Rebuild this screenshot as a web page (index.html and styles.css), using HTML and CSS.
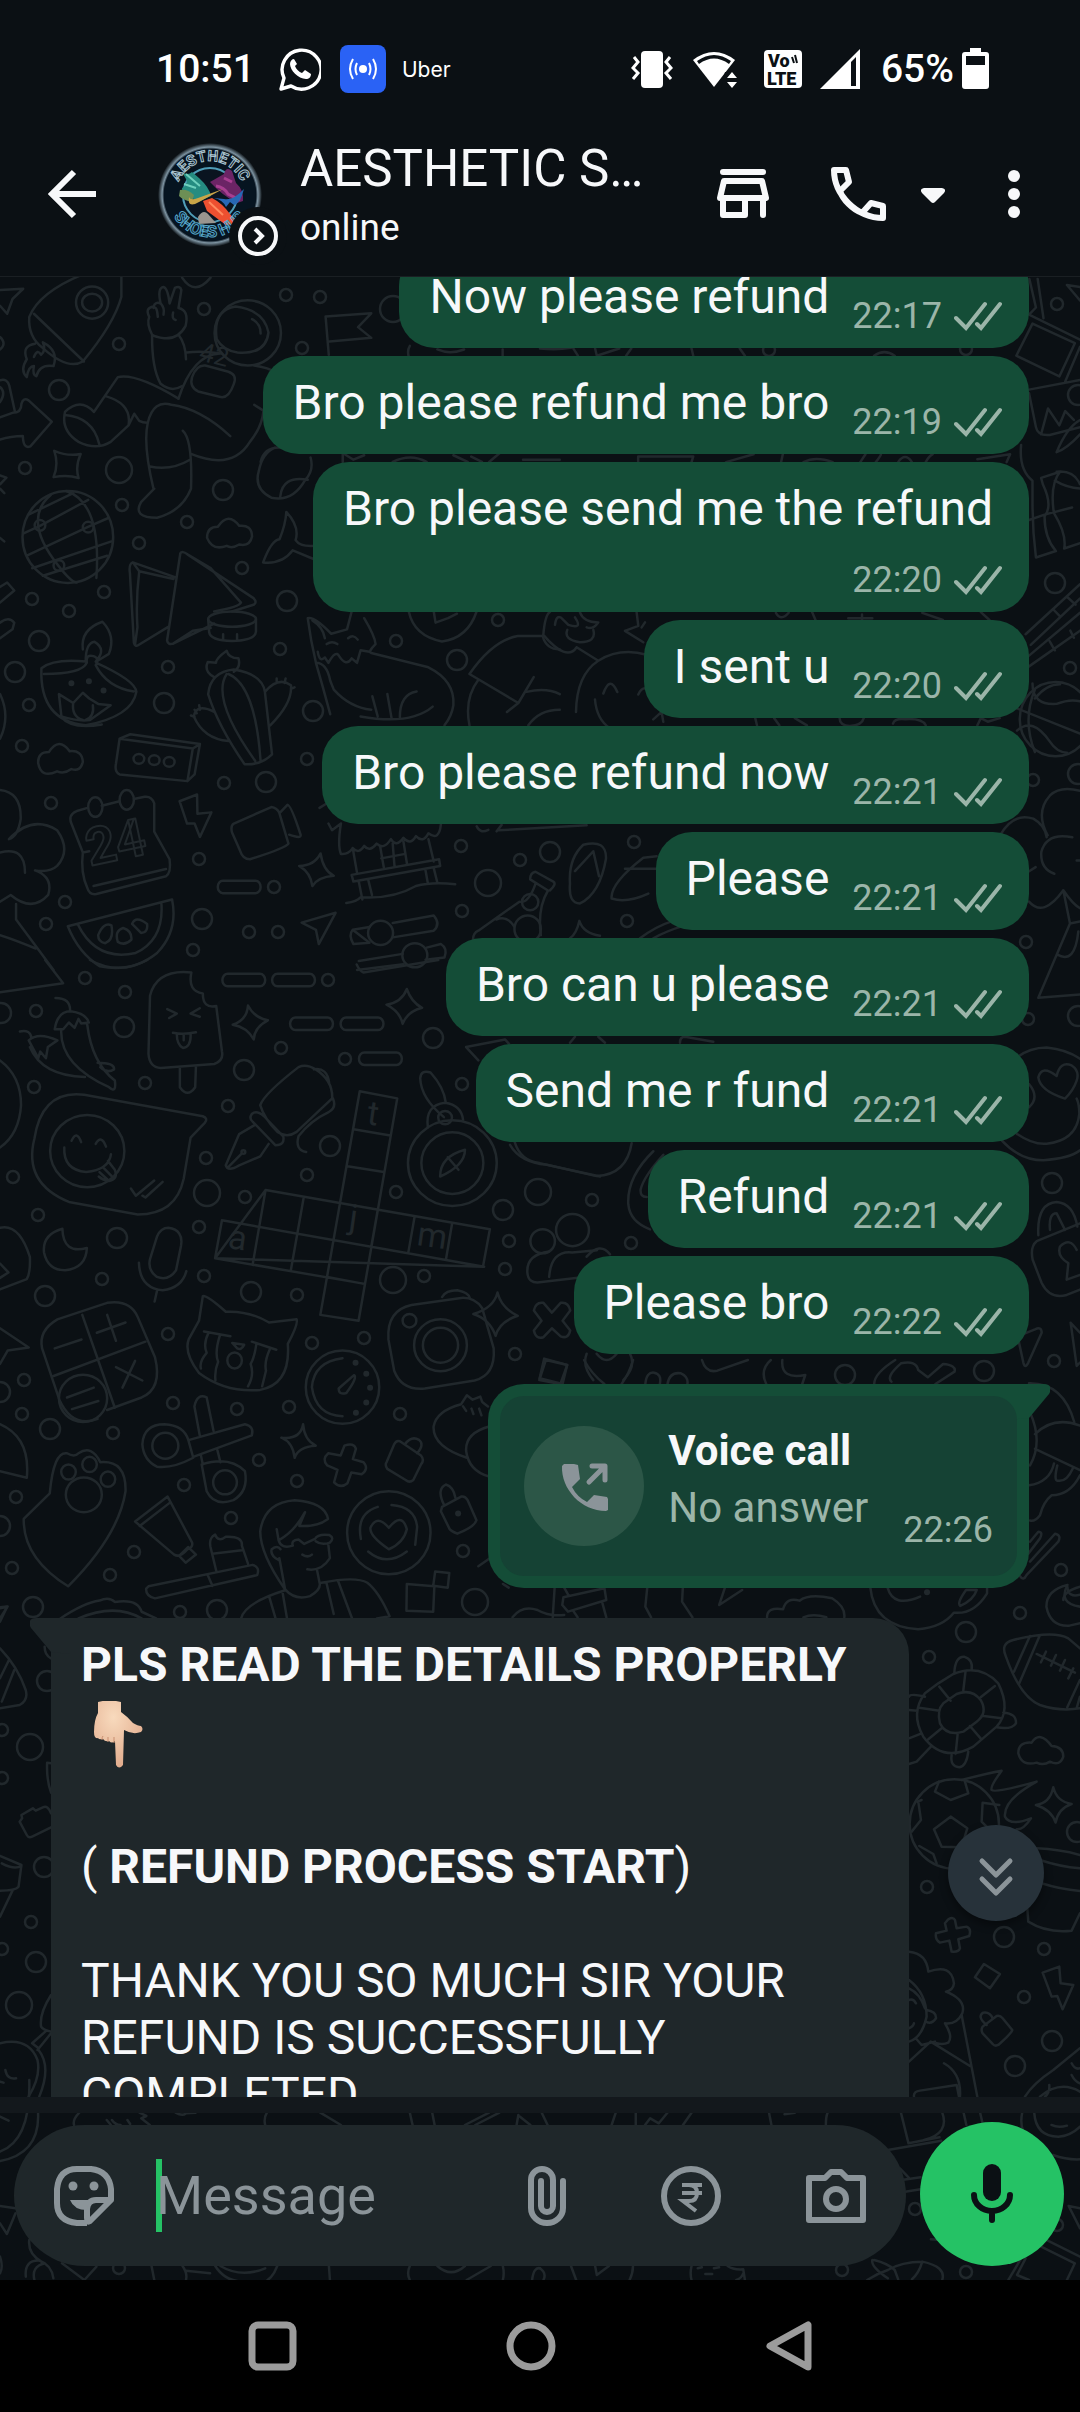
FILE: index.html
```html
<!DOCTYPE html>
<html lang="en">
<head>
    <meta charset="UTF-8">
    <meta name="viewport" content="width=device-width, initial-scale=1.0">
    <title>Chat</title>
    <link rel="stylesheet" href="styles.css">
</head>
<body>
    <!-- Shared shapes -->
    <svg class="defs" aria-hidden="true">
        <symbol id="ticks" viewBox="0 0 48 30">
            <path d="M2 17l10 10L31 3M23 23l4 4L46 3" fill="none" stroke="currentColor" stroke-width="4" stroke-linecap="round"/>
        </symbol>
    </svg>

    <!-- Wallpaper doodles -->
    <svg class="wallpaper" viewBox="0 0 1080 2412" preserveAspectRatio="xMidYMin slice" aria-hidden="true">
        <defs>
            <circle id="s" r="6"/>
            <circle id="m" r="10"/>
            <circle id="l" r="13"/>
        </defs>
        <g>
            <use href="#s" x="119" y="344"/><use href="#s" x="204" y="309"/><use href="#s" x="286" y="295"/><use href="#s" x="320" y="297"/>
            <use href="#s" x="302" y="348"/><use href="#s" x="25" y="468"/><use href="#s" x="122" y="505"/><use href="#s" x="187" y="522"/>
            <use href="#s" x="139" y="543"/><use href="#s" x="242" y="568"/><use href="#s" x="104" y="592"/><use href="#s" x="32" y="599"/>
            <use href="#s" x="69" y="611"/><use href="#s" x="168" y="667"/><use href="#s" x="280" y="649"/><use href="#s" x="29" y="705"/>
            <use href="#s" x="22" y="746"/><use href="#s" x="51" y="803"/><use href="#s" x="224" y="783"/><use href="#s" x="307" y="759"/>
            <use href="#s" x="396" y="641"/><use href="#s" x="199" y="859"/><use href="#s" x="274" y="887"/><use href="#s" x="249" y="932"/>
            <use href="#s" x="278" y="932"/><use href="#s" x="65" y="902"/><use href="#s" x="46" y="924"/><use href="#s" x="193" y="950"/>
            <use href="#s" x="461" y="846"/><use href="#s" x="462" y="911"/><use href="#s" x="520" y="860"/><use href="#s" x="498" y="620"/>
            <use href="#s" x="634" y="842"/><use href="#s" x="627" y="921"/><use href="#s" x="631" y="1243"/><use href="#s" x="85" y="978"/>
            <use href="#s" x="125" y="992"/><use href="#s" x="36" y="1011"/><use href="#s" x="281" y="1048"/><use href="#s" x="328" y="980"/>
            <use href="#s" x="345" y="1059"/><use href="#s" x="145" y="1083"/><use href="#s" x="34" y="1087"/><use href="#s" x="228" y="1106"/>
            <use href="#s" x="13" y="1177"/><use href="#s" x="206" y="1158"/><use href="#s" x="307" y="1175"/><use href="#s" x="245" y="1197"/>
            <use href="#s" x="38" y="1215"/><use href="#s" x="199" y="1227"/><use href="#s" x="396" y="1192"/><use href="#s" x="102" y="1279"/>
            <use href="#s" x="204" y="1276"/><use href="#s" x="297" y="1295"/><use href="#s" x="424" y="1276"/><use href="#s" x="364" y="1338"/>
            <use href="#s" x="312" y="1343"/><use href="#s" x="168" y="1334"/><use href="#s" x="24" y="1380"/><use href="#s" x="22" y="1414"/>
            <use href="#s" x="113" y="1433"/><use href="#s" x="173" y="1403"/><use href="#s" x="237" y="1409"/><use href="#s" x="289" y="1407"/>
            <use href="#s" x="400" y="1414"/><use href="#s" x="259" y="1460"/><use href="#s" x="184" y="1485"/><use href="#s" x="297" y="1481"/>
            <use href="#s" x="231" y="1518"/><use href="#s" x="134" y="1552"/><use href="#s" x="110" y="1575"/><use href="#s" x="16" y="1497"/>
            <use href="#s" x="12" y="1568"/><use href="#s" x="180" y="1612"/><use href="#s" x="463" y="1551"/><use href="#s" x="515" y="1354"/>
            <use href="#s" x="505" y="1269"/><use href="#s" x="509" y="1241"/><use href="#s" x="592" y="1200"/><use href="#s" x="462" y="1084"/>
            <use href="#s" x="929" y="1657"/><use href="#s" x="1020" y="1613"/><use href="#s" x="927" y="1887"/><use href="#s" x="1044" y="1949"/>
            <use href="#s" x="1024" y="1997"/><use href="#s" x="1070" y="668"/><use href="#s" x="1033" y="780"/><use href="#s" x="1026" y="942"/>
            <use href="#s" x="1028" y="1019"/><use href="#s" x="1054" y="1361"/><use href="#s" x="1061" y="1570"/><use href="#s" x="1057" y="304"/>
            <use href="#s" x="31" y="1922"/><use href="#s" x="2" y="1730"/><use href="#s" x="2" y="1778"/><use href="#s" x="2" y="1949"/>
            <use href="#s" x="769" y="350"/><use href="#s" x="966" y="349"/><use href="#s" x="782" y="602"/><use href="#s" x="119" y="2268"/>
            <use href="#s" x="842" y="2270"/><use href="#s" x="966" y="2272"/><use href="#s" x="915" y="2209"/><use href="#s" x="1057" y="2225"/>
        </g>
        <g>
            <use href="#m" x="59" y="390"/><use href="#m" x="223" y="490"/><use href="#m" x="287" y="601"/><use href="#m" x="39" y="641"/>
            <use href="#m" x="15" y="672"/><use href="#m" x="164" y="703"/><use href="#m" x="313" y="711"/><use href="#m" x="266" y="782"/>
            <use href="#m" x="202" y="919"/><use href="#m" x="457" y="660"/><use href="#m" x="550" y="852"/><use href="#m" x="124" y="1027"/>
            <use href="#m" x="244" y="1070"/><use href="#m" x="433" y="1038"/><use href="#m" x="117" y="1238"/><use href="#m" x="45" y="1296"/>
            <use href="#m" x="50" y="1429"/><use href="#m" x="251" y="1292"/><use href="#m" x="330" y="1146"/><use href="#m" x="503" y="1210"/>
            <use href="#m" x="33" y="1607"/><use href="#m" x="217" y="1610"/><use href="#m" x="966" y="1632"/><use href="#m" x="1004" y="1937"/>
            <use href="#m" x="1052" y="2041"/><use href="#m" x="1015" y="2066"/><use href="#m" x="1077" y="1832"/><use href="#m" x="1055" y="583"/>
            <use href="#m" x="1052" y="1183"/><use href="#m" x="1078" y="395"/><use href="#m" x="984" y="1371"/><use href="#m" x="845" y="1375"/>
            <use href="#m" x="36" y="1962"/><use href="#m" x="44" y="1867"/><use href="#m" x="47" y="1681"/><use href="#m" x="1" y="1013"/>
            <use href="#m" x="0" y="1392"/><use href="#m" x="0" y="1526"/><use href="#m" x="1078" y="774"/><use href="#m" x="1078" y="1016"/>
            <use href="#l" x="119" y="470"/><use href="#l" x="393" y="309"/><use href="#l" x="488" y="883"/><use href="#l" x="207" y="1193"/>
            <use href="#l" x="393" y="1280"/><use href="#l" x="538" y="1192"/><use href="#l" x="475" y="1602"/><use href="#l" x="30" y="1747"/>
            <use href="#l" x="19" y="2005"/>
        </g>

        <!-- rocket, astronaut, globe, samosa, diya, cactus, fox, calendar -->
        <g transform="translate(0 270) scale(.357 .4464)">
            <path d="M0 45L65 42L35 65L20 98L0 80M0 150q20 15 0 28M0 247q20 -5 26 12L42 318M0 262q18 12 0 34M0 330L35 320Q60 320 60 300Q65 285 80 292L145 340L85 395Q65 402 64 372Q30 372 0 380M0 460L18 465L0 480M0 490L12 500M0 600L12 608"/>
            <path d="M232 10Q110 50 82 105Q78 150 120 175Q190 225 232 205Q320 120 340 60L340 15M95 98L235 205M98 165Q60 170 75 200Q55 225 75 240Q80 215 95 215Q90 235 102 238Q110 210 150 215Q165 180 120 162Q130 180 115 190Q105 175 95 195"/>
            <ellipse cx="258" cy="73" rx="45" ry="36"/><ellipse cx="258" cy="73" rx="28" ry="20"/>
            <path d="M426 145Q410 120 418 105Q405 85 430 82Q435 70 450 75Q440 40 458 38Q470 40 475 75L490 40Q505 35 508 45L500 85Q530 90 520 125Q500 155 460 153Q435 150 426 145M430 85Q440 80 442 105M450 75Q462 85 458 100M485 95Q480 110 492 112M426 145Q425 220 450 255Q480 275 510 260M500 145Q520 165 521 200M523 185Q560 180 620 187M510 17Q545 60 590 17"/>
            <ellipse cx="694" cy="141" rx="93" ry="73"/>
            <path d="M607 155Q595 90 660 82Q740 90 752 140Q745 190 665 185Q625 180 607 155ZM706 110Q730 120 730 142M712 214Q750 218 780 232M500 288Q540 190 615 187"/>
            <path d="M575 214L640 228Q665 235 655 255Q640 290 615 284L555 272Q530 262 538 240Q550 212 575 214Z"/>
            <path d="M500 288Q380 230 330 240L263 318Q225 285 182 318Q170 360 220 385Q270 405 310 385L360 348Q370 300 298 283M182 325Q260 330 278 390M360 348L376 322L390 338Q400 342 412 342M430 490Q400 390 414 342Q430 290 480 302Q560 310 645 372M512 360Q540 380 535 490Q510 540 440 555Q370 555 395 520L432 490M420 440Q480 450 532 425M535 412Q650 450 700 385Q735 350 738 315L712 302"/>
            <path d="M152 405Q190 418 226 412Q210 440 220 466Q190 458 150 464Q165 435 152 405ZM921 190L912 104L1040 97L1003 128L1040 152L923 160M730 430Q740 395 790 398M870 420Q880 450 855 470Q820 520 760 510Q710 490 725 450Q735 410 770 398M785 508Q790 460 862 470"/>
            <ellipse cx="190" cy="598" rx="127" ry="103"/>
            <path d="M142 504Q60 560 165 664Q200 700 215 700M185 495Q285 520 270 690M80 548L205 500M66 590L112 573L247 515M75 640L245 576L305 555M90 668L312 608M120 685L300 640"/>
            <ellipse cx="112" cy="572" rx="15" ry="12"/><ellipse cx="247" cy="576" rx="15" ry="12"/><ellipse cx="165" cy="662" rx="15" ry="12"/>
            <path d="M580 600Q580 575 610 575Q640 540 670 573Q705 570 706 597Q700 620 670 615Q650 625 635 618Q595 630 580 600ZM737 655Q760 605 783 603Q800 570 802 542Q840 575 828 605Q840 620 880 618M737 655Q790 660 820 628L880 648"/>
            <path d="M490 688L372 655Q360 658 364 680L375 835Q378 845 388 840L470 800M372 655L390 675L486 692M390 675Q380 740 385 800L378 840M505 635L468 830Q470 840 485 837L600 792M505 635Q510 628 525 637L710 735Q722 745 710 750L650 765M525 637L590 668L675 745Q670 755 600 765M485 837L540 808L590 802"/>
            <ellipse cx="650" cy="782" rx="67" ry="17"/><path d="M583 782L586 812Q590 830 650 831Q715 830 717 810L717 782M625 828v-12M664 828v-12"/>
            <path d="M240 877Q150 870 116 892Q110 1010 240 1020Q370 1000 382 945Q380 920 270 880M123 905Q230 905 243 880Q240 860 262 865Q280 870 268 885Q300 935 375 944M232 850Q225 805 287 788Q325 820 305 860L270 877M240 877Q240 835 265 833Q300 850 268 877M165 950L172 1000Q220 1012 252 1008L310 975L275 972L250 960L232 947L205 970ZM205 970Q200 1000 232 1008M260 975Q265 1000 240 1008M170 1000Q200 1030 285 1018"/>
            <path class="dots" d="M200 926h.1M249 921h.1M290 942h.1"/>
            <path d="M600 912Q570 900 582 878L605 880Q605 870 635 853Q640 870 668 870Q675 890 655 900M583 950Q590 900 655 895Q735 905 742 945L762 1085Q730 1110 685 1107Q610 1020 583 950ZM635 905Q590 960 715 1100M640 905Q715 930 730 1100M742 945Q780 910 815 930Q820 970 757 1020M600 990Q550 970 543 1000Q570 1050 640 1055M775 915v10M800 915l-3 10M815 938l10 -3M558 975l2 10M535 998l10 3M545 985l6 8"/>
            <path d="M925 995Q905 935 885 880Q870 830 862 780Q880 775 928 815L972 805L985 765M1020 780Q1050 820 1052 838Q1030 855 1040 858L1200 890Q1275 920 1270 975Q1265 1000 1245 1020M875 785Q905 800 910 825M915 838Q930 830 945 838M975 825Q990 815 1002 828M890 855Q895 880 910 868L920 880Q940 850 950 865Q970 890 985 870L1000 880L1010 852L1035 855M885 880Q915 880 925 920L935 940Q980 980 1040 985M1043 955l15 45M1085 950l12 55M1120 1002Q1120 950 1167 944M1212 978Q1150 1020 1010 1000"/>
            <path d="M335 1050L540 1072L525 1145L335 1130Q320 1125 325 1105ZM335 1050L365 1040L560 1062L545 1130L525 1145M540 1072L560 1062"/>
            <ellipse cx="389" cy="1095" rx="15" ry="11"/><ellipse cx="432" cy="1098" rx="15" ry="11"/><ellipse cx="474" cy="1102" rx="15" ry="11"/>
            <path d="M107 1105Q105 1080 137 1080Q165 1045 195 1078Q230 1075 232 1102Q225 1125 200 1118Q180 1130 160 1123Q115 1140 107 1105Z"/>
            <path d="M245 1205L215 1212Q190 1220 200 1240L232 1305Q225 1350 245 1385Q250 1400 270 1398L465 1358Q480 1350 475 1320L432 1258L432 1195Q425 1178 405 1180L375 1185M285 1200L335 1190M232 1305L250 1302M262 1380L465 1342"/>
            <ellipse cx="267" cy="1203" rx="20" ry="22"/><ellipse cx="355" cy="1187" rx="20" ry="22"/>
            <path d="M503 1190L552 1175L553 1218L592 1215L560 1270L545 1240L524 1240ZM655 1240L760 1203Q775 1205 782 1215L808 1285Q800 1295 700 1320Q680 1320 672 1300L650 1260Q645 1245 655 1240ZM785 1215L805 1198Q815 1198 842 1265Q845 1275 810 1265"/>
            <path d="M838 1335Q880 1335 898 1307Q905 1345 935 1357Q890 1360 875 1380Q870 1350 838 1335ZM845 1462L940 1440L893 1510L885 1478ZM190 1470L482 1410Q500 1480 440 1530Q370 1575 280 1560Q220 1530 190 1470ZM218 1466Q270 1550 380 1530Q460 1500 452 1418M275 1490Q290 1460 312 1468Q320 1500 295 1508Q275 1505 275 1490ZM330 1505Q320 1480 345 1474Q370 1480 368 1500Q350 1515 330 1505ZM370 1465Q380 1445 412 1465Q415 1485 395 1485Z"/>
            <rect x="610" y="1368" width="120" height="28" rx="14"/>
            <path d="M0 1165Q60 1170 58 1230Q50 1270 25 1275Q90 1220 160 1255Q200 1300 160 1335Q140 1350 98 1345Q150 1360 135 1400Q90 1440 30 1400L0 1415M45 1420L45 1455L150 1568M0 1305Q70 1290 70 1350M0 950Q30 1000 0 1050M0 1490Q40 1500 100 1520M0 710L20 700L40 718L0 745M0 790Q25 775 40 790L35 805L0 825"/>
            <path d="M895 1205L915 1195M920 1240L930 1255L955 1240M955 1240Q945 1290 955 1308Q975 1310 988 1295Q1005 1310 1020 1290Q1035 1305 1055 1285Q1075 1300 1095 1275Q1110 1295 1130 1272Q1150 1290 1165 1268Q1185 1285 1200 1262Q1230 1280 1235 1242M988 1295L1000 1350M1200 1275L1215 1325M985 1355L1230 1320L1233 1335L990 1370ZM1065 1292L1075 1338M1100 1285L1105 1335M1130 1280L1140 1330M1068 1318L1135 1308M1005 1370L1015 1410M1032 1368L1042 1400M1192 1345L1198 1372M1215 1340L1225 1372M970 1418Q1000 1415 1010 1405Q1100 1410 1165 1380Q1210 1370 1275 1376M1540 1390Q1560 1375 1550 1370L1500 1348Q1485 1350 1485 1365L1535 1390M1500 1375Q1480 1420 1455 1415L1340 1480Q1325 1485 1325 1500M1535 1390Q1505 1430 1515 1490M1390 1455Q1420 1445 1440 1470"/>
            <ellipse cx="1485" cy="1416" rx="23" ry="18"/><ellipse cx="1478" cy="1476" rx="37" ry="30"/>
            <path d="M988 1478L1035 1472M1100 1463L1215 1446Q1235 1465 1215 1480L1100 1495M1035 1507L990 1510Q975 1490 988 1478ZM1005 1548L1128 1532M1195 1518L1235 1510Q1255 1520 1245 1540L1192 1545M1130 1555L1000 1568"/>
            <ellipse cx="1066" cy="1485" rx="35" ry="27"/><ellipse cx="1162" cy="1535" rx="35" ry="27"/>
            <path d="M1148 170Q1140 180 1145 195M1225 178Q1260 190 1300 178M1408 178v15M960 430v-20L990 425L1020 415M1100 430Q1150 410 1195 430M1270 415L1310 430M1320 418L1350 430M1370 430L1400 410M1465 425L1568 425M1145 765Q1160 820 1238 832Q1310 825 1335 765M1215 765L1220 790L1255 780L1280 770"/>
            <path d="M1315 905Q1380 830 1450 820L1520 820Q1530 850 1568 850M1315 905L1452 970L1495 912M1452 970L1420 990M1315 1020Q1300 960 1340 918M1475 945Q1530 935 1568 950M1480 1020Q1510 985 1568 985"/>
        </g>

        <!-- ice cream, chilli, speech bubble, pen, crossword, compass, camera, tools -->
        <g transform="translate(0 960) scale(.3827 .4464)">
            <path d="M0 72L165 52L118 0M235 0Q310 35 385 0M0 225Q55 260 55 325Q50 390 0 420M0 600Q50 590 78 665Q80 700 70 715L0 738M0 680L22 700L0 712M0 825L75 868L20 875L0 905M0 1040Q80 1070 70 1160L0 1145"/>
            <path d="M500 28Q410 20 392 80L388 210Q390 240 420 242L560 233Q585 225 580 205L565 103Q530 110 530 75Q490 70 500 28ZM470 240L470 285Q490 310 510 285L512 238M437 110L462 120L442 130M522 108L498 120L522 127M452 163Q480 168 512 162M462 166Q462 190 478 197Q500 195 498 164M480 166v14"/>
            <path d="M145 85Q185 85 183 115M143 155Q150 115 185 115Q225 120 232 140L212 142L205 132L195 152L180 140L165 155ZM160 155Q155 235 285 285Q305 300 300 270Q240 230 228 145M52 160Q80 155 82 175M75 180Q100 160 150 180L125 195L120 220L105 205L100 220ZM78 195Q110 260 222 262M255 230Q300 230 298 245Q280 255 262 240"/>
            <rect x="581" y="31" width="112" height="28" rx="14"/><rect x="711" y="31" width="112" height="28" rx="14"/><rect x="758" y="129" width="112" height="28" rx="14"/><rect x="890" y="129" width="112" height="28" rx="14"/><rect x="938" y="207" width="112" height="28" rx="14"/>
            <path d="M608 145Q645 135 648 102Q665 130 700 135Q665 150 663 178Q645 150 608 145ZM1010 100Q1050 95 1063 65Q1075 95 1103 107Q1065 115 1052 143Q1045 115 1010 100ZM932 10Q940 25 950 28L1145 0"/>
            <path d="M90 400Q110 290 220 302L530 350Q545 355 535 365L498 398L480 490Q460 570 360 570L180 542Q60 500 90 400ZM342 512L355 528L403 494M372 528L380 532L425 497"/>
            <ellipse cx="228" cy="428" rx="97" ry="81"/><path d="M187 405Q200 380 212 408M250 412Q265 390 277 418M168 420Q165 470 225 475Q285 470 290 435M260 475L285 495Q310 490 300 470L282 450M270 465l25 22M258 485q20 15 40 5"/>
            <path d="M680 325Q690 300 780 240Q800 232 825 245Q870 270 868 310L775 385Q750 400 725 385Q690 355 680 325ZM658 345Q670 335 690 350L740 395Q745 415 720 415L660 362Q650 355 658 345ZM665 370L625 390L590 460Q595 475 625 460L680 440L702 412M595 465L630 435M820 245Q855 240 860 275M870 310Q880 330 860 340Q810 360 780 395Q770 425 800 430"/>
            <ellipse cx="636" cy="430" rx="5" ry="4"/>
            <path d="M940 294L1038 310L937 808L837 795ZM924 379L1020 393M908 462L1003 475M694 515L1280 603L1262 687L562 668ZM694 515L660 683M793 535L760 695M987 560L970 643M1083 577L1067 655M1181 592L1165 672M580 583L562 668L950 725M580 583L1265 687M855 710L948 725"/>
            <ellipse cx="1182" cy="455" rx="116" ry="96"/><ellipse cx="1182" cy="455" rx="81" ry="69"/><path d="M1150 485Q1150 440 1215 425Q1215 460 1150 485ZM1170 442L1198 470M1118 375Q1110 325 1163 320Q1205 325 1210 358M1160 352Q1100 310 1098 265Q1100 245 1125 252Q1160 285 1165 320"/><ellipse cx="1163" cy="353" rx="18" ry="15"/>
            <path d="M163 602Q110 615 115 655Q125 695 170 695Q225 690 227 645Q165 660 163 602ZM410 620Q420 600 440 600Q480 605 473 640L460 695Q440 720 410 710Q385 695 392 670ZM363 678Q365 735 425 740Q475 735 487 697M410 742L404 765"/>
            <path d="M110 870Q100 830 150 805L280 768Q340 760 360 800L405 890Q425 960 370 980L280 1008M110 870L155 985Q190 1050 255 1028M215 795L300 1003M140 932L380 855M143 870L213 850M253 835L328 812M280 795L303 853M303 912L372 942M353 898L320 958M175 980L245 958M188 1006L257 988"/>
            <ellipse cx="217" cy="982" rx="63" ry="53"/>
            <path d="M530 753Q540 750 590 788Q650 785 703 812L775 805Q780 815 752 860Q760 950 680 963Q590 970 520 925Q480 880 493 850L520 808ZM533 832L602 843M545 835Q530 860 540 880Q520 900 525 915M575 840Q560 880 570 900Q560 920 563 942M607 858L638 862Q630 875 620 870ZM658 855L722 873M670 860Q665 890 655 905Q665 930 648 955M705 872Q690 900 695 920L685 955"/><ellipse cx="613" cy="897" rx="19" ry="18"/>
            <ellipse cx="895" cy="957" rx="96" ry="82"/><path d="M895 892Q820 900 815 957Q825 1020 895 1022M885 960L925 930Q935 935 905 970Q885 975 885 960Z"/>
            <path class="dots" d="M929 902h.1M957 927h.1M967 958h.1M957 991h.1M930 1014h.1"/>
            <path d="M1015 850Q1010 785 1075 773L1205 757Q1240 755 1260 780L1290 870Q1295 930 1240 942L1110 960Q1050 965 1030 920ZM1155 755Q1165 740 1195 740Q1225 745 1228 758"/><ellipse cx="1151" cy="863" rx="69" ry="58"/><ellipse cx="1151" cy="863" rx="46" ry="39"/><ellipse cx="1070" cy="808" rx="18" ry="15"/>
            <path d="M1237 793Q1290 780 1300 745Q1310 780 1353 797Q1305 810 1295 842Q1280 805 1237 793ZM1395 785Q1400 765 1420 768L1442 790L1465 768Q1485 765 1490 785L1470 808L1490 830Q1485 850 1465 843L1442 825L1420 845Q1400 850 1395 830L1415 808ZM1422 893L1482 907L1470 950L1410 937Z"/>
            <ellipse cx="1418" cy="630" rx="32" ry="27"/><ellipse cx="1496" cy="605" rx="43" ry="36"/><path d="M1435 710Q1440 650 1495 655L1560 650M1435 653Q1375 660 1378 700Q1380 725 1410 722L1510 712M1345 408Q1360 450 1410 455L1568 485M1218 195L1320 178L1330 188M1218 195L1250 225"/>
            <path d="M372 1085Q375 1040 430 1040Q480 1042 492 1075L505 1115Q450 1140 410 1135Q375 1120 372 1085ZM527 1130Q600 1110 640 1145Q650 1190 610 1210Q560 1225 540 1190ZM495 1075L640 1040Q665 1045 658 1065L505 1113M522 1065L508 1000Q515 970 540 980L558 1055M525 1110L530 1130M568 1098L576 1125"/><ellipse cx="432" cy="1088" rx="34" ry="29"/><ellipse cx="588" cy="1170" rx="31" ry="27"/>
            <path d="M735 1070Q785 1075 792 1040Q795 1075 825 1088Q780 1090 770 1115Q765 1080 735 1070ZM900 1088Q925 1080 930 1095L922 1118L950 1125Q965 1140 945 1152L918 1148L908 1172Q890 1185 873 1170L882 1142L855 1132Q840 1118 858 1105L890 1110ZM1045 1078L1100 1110Q1110 1120 1100 1130L1080 1165Q1070 1172 1060 1165L1012 1140Q1005 1130 1010 1125L1030 1085Q1035 1075 1045 1078ZM1058 1085Q1075 1065 1095 1075Q1110 1085 1090 1105"/>
            <path d="M62 1252L130 1195Q140 1100 175 1105Q195 1115 205 1105Q240 1085 262 1125Q330 1120 328 1190Q310 1290 178 1403Q60 1340 62 1252Z"/><ellipse cx="219" cy="1198" rx="47" ry="39"/><ellipse cx="179" cy="1147" rx="19" ry="17"/><ellipse cx="234" cy="1130" rx="19" ry="17"/><ellipse cx="282" cy="1163" rx="19" ry="17"/>
            <path d="M353 1258L438 1202L502 1305Q505 1315 490 1320Q470 1340 455 1332ZM365 1268L445 1215M468 1335L492 1315L512 1332L485 1350ZM388 1403L660 1355Q680 1360 672 1378L405 1430Q380 1425 382 1408ZM543 1378L555 1402M565 1368L550 1315Q545 1295 562 1287Q570 1305 590 1292Q635 1290 632 1312L648 1352M555 1330L632 1322"/>
            <path d="M745 1410Q680 1330 680 1280Q690 1215 770 1210Q850 1215 857 1252Q830 1270 782 1268L797 1237Q770 1280 728 1300L723 1275M728 1300Q735 1320 765 1312Q760 1300 780 1298L795 1308L823 1297Q830 1285 860 1288Q875 1295 862 1305Q840 1312 825 1302M858 1310L862 1340Q840 1370 803 1365M730 1345Q705 1335 710 1320Q725 1310 733 1320M730 1340L745 1410Q770 1435 810 1425Q840 1410 835 1395L828 1365M790 1332Q805 1340 815 1332M630 1475Q640 1440 745 1412M840 1395Q930 1380 960 1395Q990 1415 1018 1470L985 1475M703 1425L720 1475M738 1415L750 1475M853 1395L872 1465M883 1390L920 1475"/>
            <ellipse cx="1016" cy="1283" rx="109" ry="93"/><path d="M987 1225Q930 1240 943 1297M1023 1221Q1085 1225 1090 1270L1085 1310M962 1325Q1010 1360 1063 1325M1016 1320Q965 1290 968 1272Q985 1240 1016 1272Q1050 1235 1063 1275Q1055 1305 1016 1320Z"/>
            <path d="M1155 1225L1205 1202Q1215 1200 1222 1210L1245 1255Q1240 1270 1195 1285Q1180 1280 1175 1275L1152 1235ZM1160 1220Q1140 1185 1165 1175Q1185 1180 1190 1205M1063 1398L1135 1403L1132 1460L1062 1458ZM1137 1370L1174 1373L1170 1406L1132 1402ZM1250 1358L1280 1340"/>
            <path class="dots" d="M1197 1240h.1"/>
            <path d="M1220 1115Q1130 1090 1133 1045Q1140 1010 1205 995L1220 975L1235 985L1255 978L1260 990L1275 1000M1210 1000l8 10M1232 1005l5 12M1252 1005l6 15M1278 1045Q1215 1060 1218 1100Q1225 1145 1278 1157M158 1475Q220 1440 260 1435Q285 1425 300 1438Q360 1430 370 1460L408 1475M205 1475Q300 1440 370 1475M0 1450L20 1448L0 1475"/>
        </g>

        <!-- slippers, boat and clouds between the right hand bubbles -->
        <g transform="translate(380 600) scale(.3333 .4975)">
            <path d="M490 70Q495 30 510 24M490 70Q560 125 590 95M525 50Q530 25 550 40L565 50Q610 60 585 35M600 25Q610 45 655 45Q640 60 620 55M640 60Q650 85 600 85Q550 80 562 60M590 95L655 122M655 122Q590 150 588 225M655 122Q720 95 800 110M670 188Q690 150 712 185M775 190Q785 175 800 178M645 200Q650 240 690 258M735 62L775 52L770 25M785 55L795 45M735 62L790 85M820 240L845 225L850 245M570 570Q565 520 610 492Q680 480 678 520Q660 590 600 610Q565 610 570 570ZM585 545L640 505L657 555M695 600Q690 570 790 518L830 515M695 600Q740 610 805 590M735 540L830 540M290 455Q300 470 325 462M355 463L620 453M350 465L365 452"/>
            <path d="M570 680Q590 670 598 645Q610 670 660 675M780 680Q830 655 880 645M820 680Q860 665 910 655M390 1095Q420 1130 500 1135L650 1158Q740 1155 755 1092M820 1108Q740 1160 745 1215Q750 1250 810 1265M850 1115Q790 1160 782 1185Q780 1200 800 1200M570 890L585 878M655 878L675 890M900 890Q900 878 915 878L1000 888M620 1320Q660 1290 690 1315M620 1515Q605 1540 640 1568M650 1515Q680 1540 710 1515M730 1568Q770 1540 750 1515"/>
        </g>

        <!-- polaroid, flag, basketball, chef hat, padlock, mushroom -->
        <g transform="translate(540 270) scale(.3444 .3571)">
            <path d="M1421 25L1440 105L1420 125L1568 195M1445 25L1462 135M1430 150L1553 205L1508 298L1383 240ZM1568 215L1525 312M1420 335L1568 308M1420 345L1440 440Q1445 465 1480 462L1568 440M1455 460L1475 388L1508 435L1525 395L1550 420M1500 510Q1530 440 1568 420M1500 510Q1530 500 1568 460M1397 490Q1390 560 1430 590L1430 650Q1430 730 1440 805L1498 787Q1465 750 1465 690Q1490 660 1460 600L1455 582L1510 565Q1480 600 1492 680Q1530 740 1522 780L1568 765M1420 700L1465 685L1545 665M1500 565Q1550 560 1568 600M1495 590Q1530 610 1568 612M1530 42L1568 85M1530 42L1568 48"/>
            <path d="M1410 1020L1568 880M1425 1050L1568 920M1420 1080L1568 960M1420 1110L1568 1010M1490 950l20 20M1530 915l25 22M1480 1040l15 25M1540 1010l10 20"/>
            <path d="M0 220Q50 225 90 218M97 220L110 240M160 220L165 240L230 220M250 240L265 220M440 220L445 240M580 220L595 240M970 240Q1000 220 1030 240M285 522H445L440 538M285 522v16M540 538L620 516M700 538L705 516M765 538Q800 520 850 538M930 538L945 516M975 538Q990 520 990 516M1040 538Q1060 510 1080 538M1120 538Q1130 520 1140 516M1270 530L1365 516L1355 538M685 960Q700 985 722 960M790 958L800 980M895 975h70M935 965v20M1110 960L1170 980M1280 958L1305 980M625 1255L630 1275M680 1255L695 1275M740 1255L775 1275M870 1255Q870 1275 900 1277Q935 1275 940 1255M1025 1270Q1030 1255 1060 1258Q1110 1255 1120 1275M1270 1275L1280 1255L1300 1265L1335 1255"/>
            <circle cx="1497" cy="1258" r="104"/><path d="M1430 1158Q1430 1220 1500 1215Q1540 1200 1568 1208M1378 1225L1568 1298M1437 1175Q1400 1260 1437 1350M1385 1290Q1430 1250 1480 1320Q1500 1350 1530 1352M1437 1200Q1470 1160 1510 1160"/>
        </g>
        <g transform="translate(980 560) scale(.3333 .6633)">
            <path d="M203 415Q165 380 210 355Q240 340 300 348M223 473Q180 465 184 440Q200 410 277 418M60 415Q100 380 160 390Q195 400 200 418M290 453h10M145 470L167 463M147 515Q190 540 250 498Q280 520 300 525M250 498L270 548L175 660L300 655M270 548L300 545M232 595Q285 610 295 560"/>
            <path d="M110 750Q150 735 200 735Q260 738 300 752M65 875Q120 905 190 905Q270 902 300 890M110 865Q160 882 200 880Q290 875 298 835Q298 820 290 812M147 790Q180 810 147 825M255 812Q180 800 175 780Q185 760 230 778Q240 755 275 762Q300 770 290 785Q280 800 255 812Z"/>
            <path d="M175 1018Q170 970 230 968Q280 970 292 1005M210 1010Q205 985 230 985L255 1010M300 1000L170 1027Q150 1035 158 1055L185 1090Q210 1115 260 1108L300 1100M260 1085L265 1060Q230 1050 240 1035Q270 1020 290 1040M260 1085L300 1078"/>
            <path d="M115 1175L130 1210Q135 1220 145 1210L185 1165Q185 1155 165 1160L115 1170M272 1150L290 1215L300 1210M272 1150L300 1165M147 1241Q250 1240 283 1300M150 1285Q190 1330 150 1365M165 1318Q220 1290 300 1305M165 1340L300 1372M147 1395Q210 1390 222 1362M232 1365Q220 1390 235 1388Q260 1390 278 1370M300 1380Q270 1410 215 1410Q190 1420 180 1440Q165 1450 150 1448M150 1480L175 1465Q190 1465 180 1475L145 1498M150 1510L225 1468Q245 1470 235 1480L140 1530Q130 1540 120 1532M300 1548Q250 1555 250 1568M262 1548Q265 1565 300 1560"/>
        </g>
        <g transform="translate(480 1360) scale(.3827 .3333)">
            <path d="M172 0L228 15L210 72L155 60ZM272 0Q290 40 325 72M370 72Q390 40 400 0M432 72Q435 35 455 38Q475 42 470 72M490 72Q495 35 525 40Q545 50 542 72M580 0Q590 40 620 32L700 0M760 0Q730 30 748 72M790 0Q785 60 850 45L842 72M1030 72Q1030 40 1085 0M1075 65Q1060 50 1100 10Q1140 0 1145 30L1170 52L1210 12Q1245 15 1240 35L1190 72M1020 683Q1030 800 1145 808Q1210 800 1238 758Q1290 765 1325 700L1325 683M1065 683Q1080 745 1150 710M1270 690L1298 690Q1290 720 1255 738Q1245 730 1270 690ZM1535 675Q1480 690 1480 740Q1490 800 1540 797L1568 790M1535 675Q1510 730 1568 740M750 772Q750 740 792 748Q800 710 835 722Q860 700 920 715Q955 740 952 772M845 772Q870 760 905 772M437 683L432 740L447 772M530 683L528 725L555 772M640 683L625 735L685 690M195 683L190 772M220 683L232 708M325 683L330 720L230 755L215 735L218 712L325 685M245 755L255 772M320 730L330 772M85 772Q110 735 150 750Q180 770 220 765M60 672L75 683"/>
            <path class="dots" d="M1168 697h.1"/>
        </g>

        <!-- party hat, turtle, football, drum -->
        <g transform="translate(0 1600) scale(.357 .3333)">
            <path d="M0 145Q50 200 72 270Q80 300 55 315L0 325M25 180L0 235M40 210L5 305M0 25L20 20L0 65M143 490L132 488Q130 540 143 578M143 640Q135 615 120 622L100 632L92 625L60 645L62 655L55 665L75 705Q80 715 90 710L143 682M0 768L60 795L52 860Q45 872 0 872M5 790Q40 810 60 798M35 872L0 950M143 1185Q110 1240 115 1280Q120 1290 143 1295M143 1300L105 1350M130 1292L90 1330L108 1345M0 1330Q80 1310 105 1380Q115 1430 80 1490M108 1350Q145 1400 110 1490M15 1410Q20 1440 45 1435M0 1445L10 1448M125 140Q125 165 143 175"/>
        </g>
        <g transform="translate(560 1600) scale(.3333)">
            <path d="M1135 250L1180 222Q1260 190 1315 250Q1355 330 1310 380L1240 440Q1150 490 1090 410Q1050 340 1095 280ZM1150 310L1190 282Q1235 265 1262 300Q1285 340 1250 365L1210 395Q1160 410 1140 370Q1130 330 1150 310ZM1138 260L1172 302M1217 212L1210 272M1305 258L1262 292M1325 355L1265 347M1262 415L1230 378M1187 462L1193 403M1105 418L1145 385M1078 323L1138 332M1183 220Q1185 170 1212 170Q1240 178 1235 210M1095 290Q1050 280 1047 290M1047 330L1072 332M1330 338Q1370 340 1368 370Q1355 390 1310 382M1175 465Q1170 500 1198 502Q1220 498 1225 455M1047 415L1085 400M1115 438L1070 485L1047 492"/>
            <path d="M1338 170Q1320 130 1360 120Q1480 90 1525 115L1560 145M1338 170Q1380 290 1440 315Q1500 335 1560 325M1410 108L1362 215M1440 105L1378 250M1560 240L1522 322M1430 162L1545 218M1458 155l-15 32M1488 165l-15 32M1515 180l-15 32M1540 205l-15 30M1560 290L1550 325"/>
            <path d="M1375 460Q1375 425 1415 428Q1440 390 1475 438Q1510 440 1510 470Q1500 500 1470 485Q1450 498 1430 488Q1385 500 1375 460ZM1428 615Q1470 610 1480 562Q1490 605 1535 612Q1495 625 1487 668Q1475 630 1428 615Z"/>
            <circle cx="1183" cy="672" r="134"/><path d="M1137 545L1125 575L1172 600L1225 580L1215 545M1172 650L1222 685L1205 742L1145 740L1122 688ZM1318 615L1268 608L1265 665L1300 700M1085 600L1072 605M1075 605L1083 660L1055 695M1078 738L1120 762L1130 790M1205 540Q1280 520 1325 512Q1290 560 1295 570Q1305 580 1430 545Q1330 600 1335 650Q1350 680 1413 655Q1390 690 1370 688"/>
            <path d="M1430 745Q1500 748 1560 765M1440 780Q1500 800 1560 805M1445 850Q1500 868 1560 873M1402 925L1405 965Q1460 1000 1535 992L1560 940"/>
            <path d="M1165 958Q1180 950 1185 960L1190 985L1220 980Q1235 985 1228 1008L1195 1018L1200 1045Q1195 1058 1175 1055L1168 1022L1140 1028Q1125 1020 1128 1000L1160 992L1155 970ZM1272 1092L1320 1122L1290 1165L1245 1132ZM1448 1118L1498 1100L1502 1150L1540 1155L1508 1228L1492 1188L1475 1190ZM1268 1280L1310 1248Q1320 1245 1328 1255L1357 1290Q1355 1300 1315 1335Q1305 1340 1298 1332L1268 1300Q1262 1290 1268 1280ZM1280 1275Q1250 1250 1270 1238Q1290 1235 1298 1255"/>
            <path d="M1047 1055Q1100 1060 1105 1115Q1175 1090 1182 1150Q1180 1170 1158 1175Q1220 1200 1207 1240Q1190 1275 1155 1270Q1180 1310 1165 1328Q1150 1335 1130 1330M1047 1140Q1100 1180 1100 1250Q1085 1315 1047 1325M1047 1165Q1080 1180 1095 1225M1100 1230Q1130 1235 1128 1255Q1115 1275 1098 1265M1047 1200Q1060 1195 1068 1210M1047 1285Q1060 1280 1062 1270M1070 1318L1085 1335L1125 1325M1047 1385L1112 1325L1230 1398M1152 1390Q1205 1420 1200 1490M1062 1490Q1060 1475 1080 1472L1190 1455L1197 1490M1205 1245L1252 1490M1560 1345L1480 1410Q1420 1450 1395 1490M1560 1475Q1500 1440 1440 1490M1455 1490Q1470 1480 1468 1455M1535 1390Q1545 1410 1560 1405M1535 1425Q1545 1445 1560 1450"/>
        </g>

        <!-- doodles around the message box -->
        <g transform="translate(0 2080) scale(.3444 .3333)">
            <path d="M85 0Q90 180 0 215M110 90Q120 220 0 243M0 110L25 122M230 98Q210 120 215 135M310 120L322 135M325 120Q335 135 350 135M370 120L378 132M405 98L425 108L410 115L435 135M510 98Q530 110 540 100L568 98M775 98Q765 115 770 135M930 98L990 135M1190 98L1198 135M1255 98L1262 135M1350 135L1420 98M1380 135L1450 98M1505 105L1500 135M1510 110L1540 135M0 378L45 385M45 400L20 462L0 430M85 480Q80 520 120 545M0 530Q10 560 0 580M75 590Q70 540 115 542Q150 555 155 595M100 600Q90 560 130 550M180 550L245 600L280 560M440 558L448 600M530 558Q545 580 540 600M540 572L610 580M625 558Q650 600 700 605M640 558Q700 595 770 565M805 558Q790 600 760 610M955 558L958 600M1190 558Q1180 580 1190 600M1270 558Q1310 595 1350 558M1355 600L1425 558M1460 558Q1465 580 1460 600M1545 600Q1550 560 1568 565"/>
        </g>
        <g transform="translate(540 2080) scale(.3444 .3333)">
            <path d="M5 98L22 135M220 98L208 135M278 98v37M305 135L320 115L345 130L370 98M440 98L415 135M665 98L672 135M710 103L740 98M835 98Q830 110 830 135M1048 98L1070 190L1160 172M1115 180Q1190 160 1168 98M1010 210L1165 182M1230 98L1238 135M1278 98L1285 130M1050 300L1105 292M1060 335L1105 328M1045 265L1070 292M1400 98Q1390 150 1420 180M1435 98Q1440 170 1505 170Q1540 168 1568 140M1485 135Q1505 145 1530 137M1490 225Q1530 240 1568 238M1535 378L1568 445M1535 378L1568 385M1135 478L1165 480M965 540Q960 560 1010 595M970 540Q1010 550 1030 570L1040 598M1010 570Q1050 545 1110 545Q1180 560 1168 600M950 600Q980 580 1010 570M1110 545Q1100 580 1080 598M1470 480L1568 530M1455 500L1553 550L1530 600M1400 530L1360 600M1410 535L1385 585L1420 600M90 558L105 600M160 558L165 585L200 558M270 558Q270 580 260 600M440 558Q435 580 440 600M458 565L470 562M505 565L520 562M480 582L500 582M545 558Q560 570 590 568L595 600M570 600Q585 595 590 580M0 565Q20 580 10 600"/>
        </g>

        <text x="198" y="360" font-size="26" transform="rotate(14 198 360)">42</text>
        <text class="numerals" x="90" y="866" font-size="52" transform="rotate(-12 90 866)">24</text>
        <text x="366" y="1124" font-size="34" transform="rotate(8 366 1124)">t</text>
        <text x="227" y="1248" font-size="34" transform="rotate(8 227 1248)">a</text>
        <text x="348" y="1228" font-size="34" transform="rotate(8 348 1228)">j</text>
        <text x="416" y="1245" font-size="34" transform="rotate(8 416 1245)">m</text>
    </svg>

    <div class="app">
        <header class="topbar">
            <div class="status">
                <span class="clock">10:51</span>
                <svg class="status-wa" width="42" height="44" viewBox="0 0 42 44" aria-hidden="true">
                    <path d="M2 42l3-11a19.500 19.500 0 1 1 7 8z" fill="none" stroke="#fff" stroke-width="3.400" stroke-linejoin="round"/>
                    <path d="M15 12c-2 0-4 2-4 5 0 6 8 15 16 15 3 0 5-2 5-5l-6-4-3 3c-3-1-6-4-7-7l2-2z" fill="#fff"/>
                </svg>
                <svg class="status-cast" width="46" height="48" viewBox="0 0 46 48" aria-hidden="true">
                    <rect width="46" height="48" rx="8" fill="#2a62f5"/>
                    <circle cx="23" cy="24" r="4" fill="#fff"/>
                    <path d="M17 18q-3 6 0 12M29 18q3 6 0 12M13 14q-6 10 0 20M33 14q6 10 0 20" fill="none" stroke="#fff" stroke-width="2"/>
                </svg>
                <span class="carrier">Uber</span>
                <span class="spacer"></span>
                <svg width="42" height="40" viewBox="0 0 42 40" aria-hidden="true">
                    <rect x="10" y="2" width="22" height="37" rx="4" fill="#fff"/>
                    <path d="M3 8l4 5-5 6 5 5-5 6M39 8l-4 5 5 6-5 5 5 6" fill="none" stroke="#fff" stroke-width="3"/>
                </svg>
                <svg class="status-wifi" width="46" height="40" viewBox="0 0 46 40" aria-hidden="true">
                    <path d="M2 11q21-16 42 0L23 38z" fill="#fff"/>
                    <path d="M6 12q17-12 34 0l-2 3q-15-11-30 0z" fill="#0b1014"/>
                    <path d="M34 23h12v17H30z" fill="#0b1014"/>
                    <path d="M36 29l5-6 5 6zM36 33h10l-5 6z" fill="#fff"/>
                </svg>
                <svg class="status-volte" width="38" height="40" viewBox="0 0 38 40" role="img" aria-label="VoLTE">
                    <rect y="1" width="38" height="38" rx="4" fill="#fff"/>
                    <text x="4" y="18" font-size="18" font-weight="900" fill="#0b1014">Vo</text>
                    <text x="3" y="36" font-size="18" font-weight="900" fill="#0b1014">LTE</text>
                    <path d="M28 8l2 6M31 6l2 8" stroke="#0b1014" stroke-width="2"/>
                </svg>
                <svg class="status-signal" width="42" height="42" viewBox="0 0 42 42" aria-hidden="true">
                    <path d="M41 1v40H1z" fill="#fff"/>
                    <path d="M32 14l5-5v29h-5z" fill="#0b1014"/>
                </svg>
                <span class="battery-text">65%</span>
                <svg width="27" height="42" viewBox="0 0 27 42" aria-hidden="true">
                    <path d="M8 0h11v4h5q3 0 3 3v31q0 3-3 3H3q-3 0-3-3V7q0-3 3-3h5z" fill="#fff"/>
                    <rect x="4" y="8" width="19" height="9" fill="#0b1014"/>
                </svg>
            </div>

            <div class="contact">
                <button type="button" class="icon-btn back" aria-label="Back">
                    <svg width="60" height="60" viewBox="0 0 60 60"><path d="M54 30H11M32 8L10 30l22 22" fill="none" stroke="currentColor" stroke-width="6"/></svg>
                </button>
                <a href="#profile" class="avatar" aria-label="Contact photo">
                    <svg width="124" height="112" viewBox="0 0 124 112">
                        <defs>
                            <radialGradient id="rim"><stop offset=".88" stop-color="#06121d"/><stop offset=".92" stop-color="#7d93a1"/><stop offset="1" stop-color="#0b1014"/></radialGradient>
                            <path id="arc-top" d="M20 57a34 34 0 0 1 68 0"/>
                            <path id="arc-bottom" d="M12 57a42 42 0 0 0 84 0"/>
                        </defs>
                        <circle cx="54" cy="57" r="52" fill="url(#rim)"/>
                        <circle cx="54" cy="57" r="46" fill="#061420"/>
                        <circle cx="54" cy="57" r="27" fill="#0a1420" stroke="#4f9db8" stroke-width="2"/>
                        <path d="M26 34q6 4 10 0l7 6q10 9 12 18l-11 5q-9-2-17-7l-1-6q7-3 4-9z" fill="#258c81"/>
                        <path d="M30 36l14 12M28 46l12 4" stroke="#6fd0bd" stroke-width="2"/>
                        <path d="M24 52q8-1 14 5l-2 7q-9-2-13-6z" fill="#6d8f55"/>
                        <path d="M54 44l14-8q2-8 8-3l4 12q8 7 7 18l-6 2q-14-7-27-21z" fill="#6b2465"/>
                        <path d="M60 48q8 1 12 8l12 6M68 40l8 4" fill="none" stroke="#a83e91" stroke-width="3"/>
                        <path d="M47 63l9-3q10 5 18 16l8 10-12 1-19-14z" fill="#ed5030"/>
                        <path d="M53 64l14 13" stroke="#ff8a5e" stroke-width="2"/>
                        <path d="M42 79q5-8 10-3l8 9-17 1z" fill="#9a958f"/>
                        <path d="M33 59q-2 12 10 5l24-13-25 9q-8 3-9-1z" fill="#c9a548"/>
                        <path d="M58 60l10 1q9 2 20-10-4 15-10 16l-4-3-4 5q-3-7-12-9z" fill="#2868b5"/>
                        <text font-size="15" fill="none" stroke="#a9c3cf" stroke-width="1" font-weight="700"><textPath href="#arc-top" startOffset="50%" text-anchor="middle">AESTHETIC</textPath></text>
                        <text font-size="16" fill="none" stroke="#55a5c8" stroke-width="1" font-weight="700"><textPath href="#arc-bottom" startOffset="50%" text-anchor="middle">SHOES HUB</textPath></text>
                        <circle cx="102" cy="98" r="29" fill="#0b1014"/>
                        <circle cx="102" cy="98" r="18" fill="none" stroke="#f7f8fa" stroke-width="4"/>
                        <path d="M99 91l7 7-7 7" fill="none" stroke="#f7f8fa" stroke-width="4"/>
                    </svg>
                </a>
                <div class="contact-info">
                    <h1>AESTHETIC S…</h1>
                    <p>online</p>
                </div>
                <button type="button" class="icon-btn" aria-label="Catalogue">
                    <svg width="60" height="60" viewBox="0 0 60 60" fill="none" stroke="currentColor" stroke-width="6" stroke-linejoin="round" stroke-linecap="round"><path d="M9 8h40M10 17h38l4 17H6zM9 35v16h22V35M49 35v16"/></svg>
                </button>
                <button type="button" class="icon-btn call" aria-label="Call">
                    <svg width="60" height="60" viewBox="0 0 60 60" fill="none" stroke="currentColor" stroke-width="6" stroke-linejoin="round"><path d="M6 6h12l3 12-9 9C15 36 25 46 34 49l9-10 12 3v12C29 54 6 31 6 6z"/></svg>
                </button>
                <button type="button" class="icon-btn caret" aria-label="Call options">
                    <svg width="30" height="60" viewBox="0 0 30 60"><path d="M6 24h18q5 1 2 5l-9 9q-2 2-4 0l-9-9q-3-4 2-5z" fill="currentColor"/></svg>
                </button>
                <button type="button" class="icon-btn more" aria-label="More options">
                    <svg width="30" height="60" viewBox="0 0 30 60" fill="currentColor"><circle cx="15" cy="12" r="6"/><circle cx="15" cy="30" r="6"/><circle cx="15" cy="48" r="6"/></svg>
                </button>
            </div>
        </header>

        <main class="chat">
            <div class="messages">
                <div class="bubble sent"><p>Now please refund</p><div class="meta"><time>22:17</time><svg><use href="#ticks"/></svg></div></div>
                <div class="bubble sent"><p>Bro please refund me bro</p><div class="meta"><time>22:19</time><svg><use href="#ticks"/></svg></div></div>
                <div class="bubble sent wide"><p>Bro please send me the refund</p><div class="meta"><time>22:20</time><svg><use href="#ticks"/></svg></div></div>
                <div class="bubble sent"><p>I sent u</p><div class="meta"><time>22:20</time><svg><use href="#ticks"/></svg></div></div>
                <div class="bubble sent"><p>Bro please refund now</p><div class="meta"><time>22:21</time><svg><use href="#ticks"/></svg></div></div>
                <div class="bubble sent"><p>Please</p><div class="meta"><time>22:21</time><svg><use href="#ticks"/></svg></div></div>
                <div class="bubble sent"><p>Bro can u please</p><div class="meta"><time>22:21</time><svg><use href="#ticks"/></svg></div></div>
                <div class="bubble sent"><p>Send me r fund</p><div class="meta"><time>22:21</time><svg><use href="#ticks"/></svg></div></div>
                <div class="bubble sent"><p>Refund</p><div class="meta"><time>22:21</time><svg><use href="#ticks"/></svg></div></div>
                <div class="bubble sent"><p>Please bro</p><div class="meta"><time>22:22</time><svg><use href="#ticks"/></svg></div></div>

                <div class="call-bubble">
                    <svg class="tail tail-right" width="40" height="36" viewBox="0 0 40 36" aria-hidden="true"><path d="M0 0h34q10 1 5 10L19 34 0 36z" fill="#144d37"/></svg>
                    <div class="call-card">
                        <span class="call-icon">
                            <svg width="60" height="60" viewBox="0 0 60 60" aria-hidden="true">
                                <path d="M10 8h10l4 1 2 14-8 8q5 10 15 15l7-7 13 2 1 2v11l-2 1C27 55 7 33 8 10z" fill="#8b9499"/>
                                <path d="M35 26L50 11M38 10h13v14" fill="none" stroke="#8b9499" stroke-width="5" stroke-linecap="round" stroke-linejoin="round"/>
                            </svg>
                        </span>
                        <div class="call-text">
                            <strong>Voice call</strong>
                            <span>No answer</span>
                        </div>
                        <time>22:26</time>
                    </div>
                </div>

                <div class="bubble received">
                    <svg class="tail tail-left" width="40" height="36" viewBox="0 0 40 36" aria-hidden="true"><path d="M40 0H6Q-4 1 1 10l20 24 19 2z" fill="#1f272a"/></svg>
                    <p><strong>PLS READ THE DETAILS PROPERLY</strong></p>
                    <p class="emoji-line">
                        <svg width="66" height="72" viewBox="0 0 66 72" role="img" aria-label="Pointing down">
                            <defs><radialGradient id="skin" cx=".4" cy=".25" r=".8"><stop offset="0" stop-color="#f8dabd"/><stop offset="1" stop-color="#e0a98a"/></radialGradient></defs>
                            <path d="M17 1q11-3 23 0l0 10q7 5 12 11 5 3 8 3 3 3 0 6-8 3-17-2l-1 35q-4 5-7 0l-1-24q-3 3-6 0-4 1-6-2-4 1-5-1-4 1-4-6 0-12 4-19z" fill="url(#skin)"/>
                            <path d="M21 39q0-3 1-4M27 41v-5M33 42v-6" stroke="#c98f70" stroke-width="1" fill="none"/>
                        </svg>
                    </p>
                    <p>&nbsp;</p>
                    <p>( <strong>REFUND PROCESS START</strong>)</p>
                    <p>&nbsp;</p>
                    <p>THANK YOU SO MUCH SIR YOUR REFUND IS SUCCESSFULLY COMPLETED</p>
                </div>
            </div>
            <button type="button" class="scroll-down" aria-label="Scroll to latest">
                <svg width="48" height="48" viewBox="0 0 48 48" fill="none" stroke="#8b9499" stroke-width="5" stroke-linecap="round" stroke-linejoin="round"><path d="M10 12l14 14 14-14M10 30l14 14 14-14"/></svg>
            </button>
        </main>

        <div class="strip"></div>

        <form class="composer">
            <div class="field">
                <button type="button" class="icon-btn" aria-label="Stickers">
                    <svg width="60" height="60" viewBox="0 0 60 60" fill="none" stroke="currentColor" stroke-width="6" stroke-linejoin="round"><path d="M33 57H23Q3 55 3 37V23Q5 3 23 3h14q18 2 20 20v11L36 55q-3 2-3-3V43q1-9 9-9h15"/><circle cx="19" cy="20" r="4.500" fill="currentColor" stroke="none"/><circle cx="40" cy="20" r="4.500" fill="currentColor" stroke="none"/><path d="M16 34h24q-7 3-7 10-13 0-17-10z" fill="currentColor" stroke="none"/></svg>
                </button>
                <label class="entry">
                    <input type="text" placeholder="Message" aria-label="Message">
                </label>
                <button type="button" class="icon-btn" aria-label="Attach">
                    <svg width="60" height="60" viewBox="0 0 60 60" fill="none" stroke="currentColor" stroke-width="6" stroke-linecap="round"><path d="M47 15v27a16 15 0 0 1-32 0V14a11 11 0 0 1 22 0v26a6 6 0 0 1-12 0V15"/></svg>
                </button>
                <button type="button" class="icon-btn" aria-label="Send payment">
                    <svg width="60" height="60" viewBox="0 0 60 60" fill="none" stroke="currentColor"><circle cx="30" cy="30" r="27" stroke-width="6"/><path d="M21 19h20M21 27h20M21 19h7q8 0 8 8t-8 8h-6l13 10" stroke-width="4"/></svg>
                </button>
                <button type="button" class="icon-btn" aria-label="Camera">
                    <svg width="60" height="60" viewBox="0 0 60 60" fill="none" stroke="currentColor" stroke-width="6" stroke-linejoin="round"><path d="M3 12h16l6-6h10l6 6h16v42H3z"/><circle cx="30" cy="33" r="10"/></svg>
                </button>
            </div>
            <button type="button" class="mic" aria-label="Record voice message">
                <svg width="60" height="60" viewBox="0 0 60 60" aria-hidden="true"><rect x="21" y="0" width="18" height="37" rx="9" fill="#0b1014"/><path d="M12 31a18 16 0 0 0 36 0M30 47v9" fill="none" stroke="#0b1014" stroke-width="6" stroke-linecap="round"/></svg>
            </button>
        </form>

        <nav class="android-nav">
            <button type="button" aria-label="Recent apps"><svg width="60" height="60" viewBox="0 0 60 60"><rect x="9" y="9" width="41" height="42" rx="6"/></svg></button>
            <button type="button" aria-label="Home"><svg width="60" height="60" viewBox="0 0 60 60"><circle cx="30" cy="30" r="21"/></svg></button>
            <button type="button" aria-label="Back"><svg width="60" height="60" viewBox="0 0 60 60"><path d="M49 9v42L11 30z"/></svg></button>
        </nav>
    </div>
</body>
</html>
```

FILE: styles.css
```css
:root {
    --bg: #0b1014;
    --sent: #144d37;
    --received: #1f272a;
    --doodle: #21282c;
    --text: #f7f8fa;
    --sent-meta: #9bb5a9;
    --muted: #8b9499;
    --green: #25c265;
    --side: 51px;
}

* {
    box-sizing: border-box;
}

body {
    margin: 0;
    background-color: var(--bg);
    color: var(--text);
    font-family: Roboto, "Noto Sans", sans-serif;
}

h1,
p {
    margin: 0;
    font-weight: 400;
}

svg {
    display: block;
    flex: none;
}

button {
    padding: 0;
    border: none;
    background: none;
    color: inherit;
    cursor: pointer;
}

.defs {
    position: absolute;
    width: 0;
    height: 0;
}

.wallpaper {
    position: absolute;
    top: 0;
    left: 0;
    width: 100%;
    height: 100%;
    z-index: -1;
    fill: none;
    stroke: var(--doodle);
    stroke-width: 2.5;
    stroke-linecap: round;
    stroke-linejoin: round;
}

.wallpaper path,
.wallpaper rect,
.wallpaper circle,
.wallpaper ellipse {
    vector-effect: non-scaling-stroke;
}

.wallpaper .dots {
    stroke-width: 6;
}

.wallpaper text {
    fill: var(--doodle);
    stroke: none;
}

.wallpaper .numerals {
    fill: none;
    stroke: var(--doodle);
    stroke-width: 2;
    font-weight: 700;
}

.app {
    display: flex;
    flex-direction: column;
    height: 100vh;
}

/* Top bar */
.topbar {
    background-color: var(--bg);
    border-bottom: 1px solid #1a1f23;
    padding-bottom: 26px;
}

.status {
    display: flex;
    align-items: center;
    height: 138px;
    padding: 0 91px 0 156px;
    color: #fff;
}

.clock,
.battery-text {
    font-size: 39px;
    font-weight: 500;
}

.status-wa {
    margin-left: 24px;
}

.status-cast {
    margin: 0 16px 0 19px;
}

.carrier {
    font-family: Inter, Roboto, sans-serif;
    font-size: 21px;
}

.spacer {
    flex: 1;
}

.status-wifi {
    margin: 0 27px 0 18px;
}

.status-signal {
    margin: 0 20px 0 17px;
}

.battery-text {
    margin-right: 8px;
}

.contact {
    display: flex;
    align-items: center;
    height: 112px;
    padding: 0 var(--side) 0 42px;
}

.avatar {
    margin: 0 20px 0 54px;
}

.avatar svg {
    overflow: visible;
}

.contact-info {
    flex: 1;
    min-width: 0;
}

.contact-info h1 {
    font-size: 51px;
    line-height: 60px;
    white-space: nowrap;
    overflow: hidden;
}

.contact-info p {
    margin-top: 8px;
    font-size: 37px;
    line-height: 42px;
}

.call {
    margin: 0 30px 0 54px;
}

.more {
    margin-left: 51px;
}

/* Messages */
.chat {
    position: relative;
    flex: 1;
    min-height: 0;
    overflow: hidden;
}

.messages {
    display: flex;
    flex-direction: column;
    align-items: flex-end;
    gap: 8px;
    margin-top: -27px;
    padding: 0 var(--side);
}

.bubble {
    border-radius: 36px;
    font-size: 48px;
    line-height: 57px;
}

.sent {
    display: flex;
    align-items: flex-end;
    gap: 23px;
    padding: 18px 27px 11px 30px;
    background-color: var(--sent);
}

.sent p {
    margin-bottom: 12px;
}

.wide {
    flex-direction: column;
    gap: 10px;
}

.wide p {
    padding-right: 9px;
}

.meta {
    display: flex;
    align-items: center;
    gap: 12px;
    color: var(--sent-meta);
}

.meta svg {
    width: 48px;
    height: 30px;
}

time {
    font-size: 36px;
    line-height: 42px;
    color: var(--sent-meta);
}

.call-bubble {
    position: relative;
    margin-top: 22px;
    padding: 12px;
    border-radius: 36px 0 36px 36px;
    background-color: var(--sent);
}

.tail {
    position: absolute;
    top: 0;
}

.tail-right {
    right: -21px;
}

.tail-left {
    left: -21px;
}

.call-card {
    display: flex;
    position: relative;
    padding: 26px 24px 25px;
    border-radius: 24px;
    background-color: #154234;
}

.call-icon {
    display: grid;
    place-items: center;
    width: 120px;
    height: 120px;
    margin: 4px 24px 5px 0;
    border-radius: 50%;
    background-color: #2c5647;
}

.call-text {
    display: flex;
    flex-direction: column;
    margin-right: 35px;
    font-size: 42px;
    line-height: 57px;
    color: var(--sent-meta);
}

.call-text strong {
    color: var(--text);
}

.call-card time {
    align-self: flex-end;
}

.received {
    position: relative;
    align-self: flex-start;
    width: 88%;
    max-width: 858px;
    margin-top: 22px;
    padding: 18px 30px 40px;
    border-top-left-radius: 0;
    background-color: var(--received);
}

.emoji-line {
    display: flex;
    align-items: flex-start;
    height: 88px;
    padding-top: 8px;
}

.scroll-down {
    position: absolute;
    right: 36px;
    bottom: 176px;
    display: grid;
    place-items: center;
    width: 96px;
    height: 96px;
    border-radius: 50%;
    background-color: #27323a;
    box-shadow: 0 4px 8px rgba(0, 0, 0, 0.4);
}

/* Composer */
.strip {
    height: 16px;
    background-color: #13181c;
}

.composer {
    display: flex;
    align-items: flex-end;
    gap: 14px;
    padding: 9px 16px 14px 14px;
}

.field {
    display: flex;
    align-items: center;
    flex: 1;
    min-width: 0;
    height: 141px;
    padding: 0 40px;
    gap: 85px;
    border-radius: 71px;
    background-color: var(--received);
    color: var(--muted);
}

.entry {
    position: relative;
    flex: 1;
    min-width: 0;
    margin: 0 -25px 0 -43px;
}

/* text cursor */
.entry::before {
    content: "";
    position: absolute;
    top: 0;
    left: 0;
    width: 6px;
    height: 73px;
    background-color: var(--green);
}

.entry input {
    position: relative;
    display: block;
    width: 100%;
    height: 73px;
    padding: 0;
    border: none;
    outline: none;
    background: none;
    color: var(--text);
    font-family: inherit;
    font-size: 54px;
}

.entry input::placeholder {
    color: var(--muted);
    opacity: 1;
}

.mic {
    display: grid;
    place-items: center;
    width: 144px;
    height: 144px;
    border-radius: 50%;
    background-color: var(--green);
}

/* System navigation */
.android-nav {
    display: flex;
    justify-content: center;
    align-items: center;
    gap: 198px;
    height: 132px;
    padding-right: 18px;
    background-color: #000;
}

.android-nav svg {
    fill: none;
    stroke: #9b9b9b;
    stroke-width: 7;
    stroke-linejoin: round;
}
```
